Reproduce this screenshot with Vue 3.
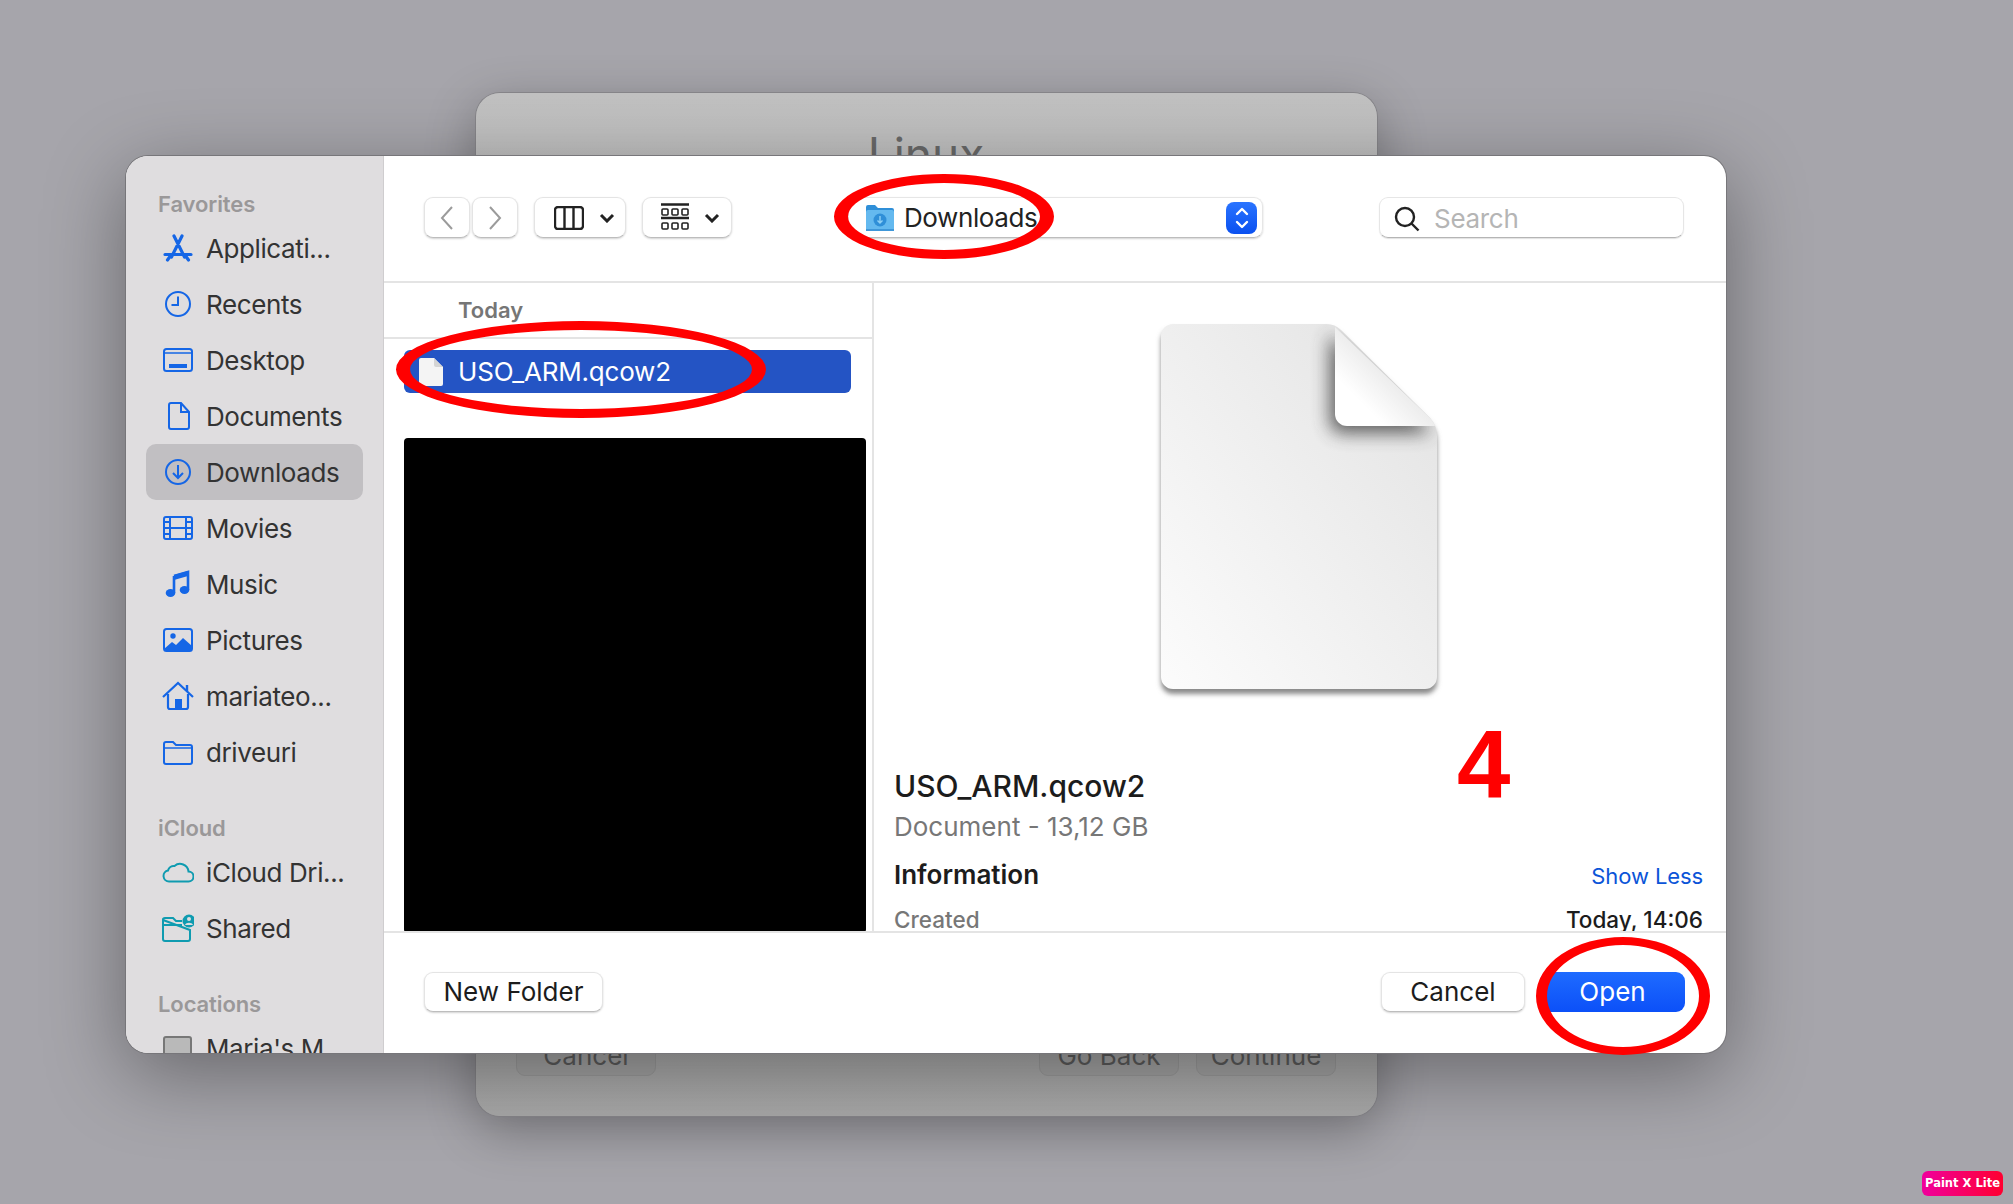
<template>
  <div class="desktop">
    <div class="back-window">
      <h1 class="back-title">Linux</h1>
      <div class="back-footer">
        <button class="back-btn">Cancel</button>
        <div class="back-right">
          <button class="back-btn">Go Back</button>
          <button class="back-btn">Continue</button>
        </div>
      </div>
    </div>

    <div class="dialog">
      <aside class="sidebar">
        <template v-for="section in sections" :key="section.title">
          <div class="side-title">{{ section.title }}</div>
          <div
            v-for="item in section.items"
            :key="item.label"
            class="side-item"
            :class="{ active: item.label === 'Downloads' }"
          >
            <svg class="side-icon" :class="section.tone" viewBox="0 0 32 32" v-html="icons[item.icon]"></svg>
            <span>{{ item.label }}</span>
          </div>
        </template>
      </aside>

      <div class="main">
        <div class="toolbar">
          <div class="nav-group">
            <button class="tool-btn nav-btn">
              <svg width="16" height="26" viewBox="0 0 16 26"><path d="M13 2 3 13l10 11" class="nav-line" /></svg>
            </button>
            <button class="tool-btn nav-btn">
              <svg width="16" height="26" viewBox="0 0 16 26"><path d="m3 2 10 11L3 24" class="nav-line" /></svg>
            </button>
          </div>
          <button class="tool-btn view-btn">
            <svg width="30" height="24" viewBox="0 0 30 24">
              <rect x="1" y="1" width="28" height="22" rx="3" class="dark-line" />
              <path d="M10.500 1v22M19.500 1v22" class="dark-line" />
            </svg>
            <svg width="16" height="10" viewBox="0 0 16 10"><path d="m2 2 6 6 6-6" class="chev" /></svg>
          </button>
          <button class="tool-btn group-btn">
            <svg width="28" height="30" viewBox="0 0 28 30">
              <path d="M0 1.500h28M0 15h28" class="dark-line" />
              <g class="thin-line">
                <rect x="1" y="6" width="6" height="6" rx="1" />
                <rect x="11" y="6" width="6" height="6" rx="1" />
                <rect x="21" y="6" width="6" height="6" rx="1" />
                <rect x="1" y="20" width="6" height="6" rx="1" />
                <rect x="11" y="20" width="6" height="6" rx="1" />
                <rect x="21" y="20" width="6" height="6" rx="1" />
              </g>
            </svg>
            <svg width="16" height="10" viewBox="0 0 16 10"><path d="m2 2 6 6 6-6" class="chev" /></svg>
          </button>

          <div class="path-popup">
            <svg width="30" height="28" viewBox="0 0 30 28">
              <path d="M1 3a2 2 0 0 1 2-2h7l3 3h14a2 2 0 0 1 2 2v4H1z" fill="#2f8fd8" />
              <rect x="1" y="6" width="28" height="21" rx="2" fill="#64b9ef" />
              <rect x="1" y="25" width="28" height="2" fill="#3f97d9" />
              <circle cx="15" cy="16" r="6.500" fill="#2f8fd8" />
              <path d="M15 12v7m-2.500-2.500L15 19l2.500-2.500" stroke="#8fd0f5" stroke-width="1.400" fill="none" />
            </svg>
            <span class="path-name">Downloads</span>
            <span class="stepper">
              <svg width="16" height="26" viewBox="0 0 16 26">
                <path d="m3 9 5-5 5 5M3 17l5 5 5-5" fill="none" stroke="#fff" stroke-width="2.400" stroke-linecap="round" stroke-linejoin="round" />
              </svg>
            </span>
          </div>

          <div class="search">
            <svg width="26" height="26" viewBox="0 0 26 26">
              <circle cx="11" cy="11" r="9" class="dark-line" />
              <path d="m17.500 17.500 7 7" class="dark-line" />
            </svg>
            <span>Search</span>
          </div>
        </div>

        <div class="browser">
          <div class="file-list">
            <div class="list-head">Today</div>
            <div class="file-row">
              <svg width="24" height="28" viewBox="0 0 24 28">
                <path d="M2 0h13l9 9v17a2 2 0 0 1-2 2H2a2 2 0 0 1-2-2V2a2 2 0 0 1 2-2z" fill="#f4f4f4" />
                <path d="M15 0l9 9h-7a2 2 0 0 1-2-2z" fill="#d4d4d4" />
              </svg>
              <span>USO_ARM.qcow2</span>
            </div>
            <div class="redacted"></div>
          </div>

          <div class="preview">
            <svg class="doc" width="300" height="400" viewBox="0 0 300 400">
              <defs>
                <linearGradient id="paper" x1="1" y1="0" x2="0" y2="1">
                  <stop offset="0" stop-color="#e2e2e2" />
                  <stop offset="1" stop-color="#fcfcfc" />
                </linearGradient>
                <linearGradient id="fold" x1="1" y1="0" x2="0" y2="1">
                  <stop offset="0.250" stop-color="#dcdcdc" />
                  <stop offset="0.750" stop-color="#ffffff" />
                </linearGradient>
                <filter id="soft" x="-30%" y="-30%" width="160%" height="160%"><feGaussianBlur stdDeviation="9" /></filter>
                <filter id="edge" x="-10%" y="-10%" width="120%" height="120%"><feGaussianBlur stdDeviation="2.500" /></filter>
                <clipPath id="paper-clip"><path :d="paperPath" /></clipPath>
              </defs>
              <path :d="paperPath" transform="translate(0 5)" fill="#8a8a8a" filter="url(#edge)" />
              <path :d="paperPath" fill="url(#paper)" />
              <g clip-path="url(#paper-clip)">
                <path :d="foldPath" transform="translate(-5 7)" fill="#444" opacity=".85" filter="url(#soft)" />
              </g>
              <path :d="foldPath" fill="url(#fold)" />
            </svg>
            <div class="doc-name">USO_ARM.qcow2</div>
            <div class="doc-kind">Document - 13,12 GB</div>
            <div class="info-head">
              <span class="info-title">Information</span>
              <span class="show-less">Show Less</span>
            </div>
            <div class="info-row">
              <span class="info-key">Created</span>
              <span class="info-val">Today, 14:06</span>
            </div>
          </div>
        </div>

        <div class="footer">
          <button class="tool-btn foot-btn new-folder">New Folder</button>
          <div class="foot-right">
            <button class="tool-btn foot-btn cancel">Cancel</button>
            <button class="foot-btn open">Open</button>
          </div>
        </div>
      </div>
    </div>

    <svg class="marks" width="2013" height="1204" viewBox="0 0 2013 1204">
      <path v-for="(d, i) in rings" :key="i" :d="d" fill="#ff0000" fill-rule="evenodd" />
    </svg>
    <div class="step-no">4</div>
    <div class="badge">Paint X Lite</div>
  </div>
</template>

<script setup>
const sections = [
  {
    title: 'Favorites',
    tone: 'blue',
    items: [
      { label: 'Applicati...', icon: 'apps' },
      { label: 'Recents', icon: 'clock' },
      { label: 'Desktop', icon: 'desktop' },
      { label: 'Documents', icon: 'doc' },
      { label: 'Downloads', icon: 'download' },
      { label: 'Movies', icon: 'film' },
      { label: 'Music', icon: 'music' },
      { label: 'Pictures', icon: 'picture' },
      { label: 'mariateo...', icon: 'home' },
      { label: 'driveuri', icon: 'folder' },
    ],
  },
  {
    title: 'iCloud',
    tone: 'teal',
    items: [
      { label: 'iCloud Dri...', icon: 'cloud' },
      { label: 'Shared', icon: 'shared' },
    ],
  },
  {
    title: 'Locations',
    tone: 'gray',
    items: [{ label: "Maria's M...", icon: 'disk' }],
  },
]

const icons = {
  apps: '<path d="M12 4l10.500 21M20 4 9.500 25M3 22.500h26M5.500 28l2.500-3.500M26.500 28 24 24.500" fill="none" stroke="currentColor" stroke-width="3.200" stroke-linecap="round"/>',
  clock: '<circle cx="16" cy="16" r="12" fill="none" stroke="currentColor" stroke-width="2"/><path d="M16 8.500V17H9.500" fill="none" stroke="currentColor" stroke-width="2"/>',
  desktop: '<rect x="2" y="5" width="28" height="22" rx="2.500" fill="none" stroke="currentColor" stroke-width="2"/><path d="M2 9h28" stroke="currentColor" stroke-width="1.500"/><rect x="7" y="20" width="18" height="4" fill="currentColor"/>',
  doc: '<path d="M9 3h10l8 9v15a2 2 0 0 1-2 2H9a2 2 0 0 1-2-2V5a2 2 0 0 1 2-2z" fill="none" stroke="currentColor" stroke-width="2"/><path d="M19 3v9h8" fill="none" stroke="currentColor" stroke-width="2"/>',
  download: '<circle cx="16" cy="16" r="12" fill="none" stroke="currentColor" stroke-width="2"/><path d="M16 9v13m-5-5 5 5 5-5" fill="none" stroke="currentColor" stroke-width="2"/>',
  film: '<rect x="2" y="5" width="28" height="22" rx="2" fill="none" stroke="currentColor" stroke-width="2"/><path d="M8 5v22M24 5v22M8 16h16M2 10h6M2 16h6M2 22h6M24 10h6M24 16h6M24 22h6" fill="none" stroke="currentColor" stroke-width="2"/>',
  music: '<path d="M12 8 26 4v18" fill="none" stroke="currentColor" stroke-width="2.600"/><path d="M12 7 26 3v5L12 12z" fill="currentColor"/><path d="M12 8v17" fill="none" stroke="currentColor" stroke-width="2.600"/><ellipse cx="8.500" cy="25" rx="4.800" ry="4" fill="currentColor"/><ellipse cx="22.500" cy="22" rx="4.800" ry="4" fill="currentColor"/>',
  picture: '<rect x="2" y="5" width="28" height="22" rx="2.500" fill="none" stroke="currentColor" stroke-width="2"/><circle cx="11" cy="12" r="2.700" fill="currentColor"/><path d="M2 25l8-7 4 3 7-7 9 8v3a2 2 0 0 1-2 2H4a2 2 0 0 1-2-2z" fill="currentColor"/>',
  home: '<path d="M1 17 16 3l15 14" fill="none" stroke="currentColor" stroke-width="2.200"/><path d="M6 14v13a2 2 0 0 0 2 2h16a2 2 0 0 0 2-2V14" fill="none" stroke="currentColor" stroke-width="2.200"/><rect x="13" y="19" width="7" height="10" fill="currentColor"/><path d="M25 5v6" stroke="currentColor" stroke-width="2.400"/>',
  folder: '<path d="M2 8a2 2 0 0 1 2-2h7l3 3h14a2 2 0 0 1 2 2v15a2 2 0 0 1-2 2H4a2 2 0 0 1-2-2z" fill="none" stroke="currentColor" stroke-width="2"/><path d="M2 12h28" stroke="currentColor" stroke-width="1.500"/>',
  cloud: '<path d="M7 25.500a5.500 5.500 0 0 1-1-10.900A6 6 0 0 1 12.500 10a8.500 8.500 0 0 1 14 5.500 5 5 0 0 1 0 10z" fill="none" stroke="currentColor" stroke-width="2"/>',
  shared: '<path d="M1 8a2 2 0 0 1 2-2h8l3 3h6M28 18v9a2 2 0 0 1-2 2H3a2 2 0 0 1-2-2V8zM1 13h19" fill="none" stroke="currentColor" stroke-width="2"/><circle cx="27" cy="9" r="6.500" fill="currentColor"/><circle cx="27" cy="7" r="2" fill="#dfdddf"/><path d="M23 13c1-3 7-3 8 0z" fill="#dfdddf"/>',
  disk: '<rect x="2" y="5" width="27" height="24" rx="2" fill="#b9b9b9" stroke="#777" stroke-width="2"/>',
}

const paperPath =
  'M24 12H178q8 0 14 6L281 106q7 8 7 18V365a12 12 0 0 1-12 12H24a12 12 0 0 1-12-12V24a12 12 0 0 1 12-12Z'
const foldPath = 'M186 15 281 106q3 3 5 8H198a12 12 0 0 1-12-12Z'

// hand drawn rings: thicker on the sides than on top and bottom
const ring = (cx, cy, rx, ry, side, top) => {
  const oval = (a, b) =>
    `M${cx - a} ${cy}a${a} ${b} 0 1 0 ${2 * a} 0a${a} ${b} 0 1 0 ${-2 * a} 0Z`
  return oval(rx, ry) + oval(rx - side, ry - top)
}

const rings = [
  ring(944, 216.5, 110, 42.5, 14, 9),
  ring(581, 369.5, 185, 48.5, 14, 9),
  ring(1623, 996, 87, 59, 11, 8),
]
</script>

<style scoped>
.desktop {
  position: relative;
  width: 2013px;
  height: 1204px;
  overflow: hidden;
  background: #a6a5ab;
  font-family: Inter, "Liberation Sans", sans-serif;
}

.back-window {
  position: absolute;
  left: 476px;
  top: 93px;
  width: 901px;
  height: 1023px;
  box-sizing: border-box;
  border-radius: 24px;
  background: linear-gradient(#c1c1c1, #a9a9a9);
  box-shadow: 0 0 0 1px #868589, 0 14px 50px rgba(0, 0, 0, 0.3);
  display: flex;
  flex-direction: column;
  justify-content: space-between;
  padding: 0 41px 40px 40px;
}

.back-title {
  margin: 31px 0 0;
  text-align: center;
  font-size: 46px;
  line-height: 60px;
  font-weight: 400;
  color: #696969;
}

.back-footer {
  display: flex;
  justify-content: space-between;
}

.back-right {
  display: flex;
  gap: 17px;
}

.back-btn {
  width: 140px;
  height: 60px;
  padding: 18px 0 0;
  border: 1px solid #9b9b9b;
  border-radius: 9px;
  background: #a4a4a4;
  color: #5c5c5c;
  font: 400 26px Inter, sans-serif;
}

.dialog {
  position: absolute;
  left: 126px;
  top: 156px;
  width: 1600px;
  height: 897px;
  display: flex;
  overflow: hidden;
  border-radius: 22px;
  background: #fff;
  box-shadow: 0 0 0 1px #77767a, 0 20px 80px rgba(0, 0, 0, 0.38);
}

.sidebar {
  flex: none;
  width: 258px;
  box-sizing: border-box;
  padding: 34px 20px 0;
  background: #dfdddf;
  border-right: 1px solid #cfcdcf;
  overflow: hidden;
}

.side-title {
  height: 28px;
  margin: 0 0 2px 12px;
  font-size: 22px;
  line-height: 28px;
  font-weight: 600;
  letter-spacing: -0.1px;
  color: #9a9899;
}

.side-item + .side-title {
  margin-top: 34px;
}

.side-item {
  display: flex;
  align-items: center;
  gap: 12px;
  height: 56px;
  padding-left: 16px;
  border-radius: 10px;
  font-size: 26px;
  letter-spacing: -0.4px;
  color: #333;
  white-space: nowrap;
}

.side-item.active {
  background: #c1bfc2;
}

.side-icon {
  flex: none;
  width: 32px;
  height: 32px;
}

.blue {
  color: #1566e6;
}

.teal {
  color: #0f9bb0;
}

.gray {
  color: #777;
}

.main {
  flex: 1;
  min-width: 0;
  display: flex;
  flex-direction: column;
}

.toolbar {
  flex: none;
  height: 127px;
  box-sizing: border-box;
  padding: 41px 40px 0;
  display: flex;
  align-items: flex-start;
  border-bottom: 2px solid #e4e4e4;
}

.tool-btn {
  background: #fff;
  border: 1px solid #e4e4e4;
  border-bottom-color: #bdbdbd;
  border-radius: 9px;
  box-shadow: 0 1px 2px rgba(0, 0, 0, 0.18);
  box-sizing: border-box;
}

.nav-group {
  display: flex;
  gap: 2px;
}

.nav-btn {
  width: 46px;
  height: 41px;
  display: flex;
  align-items: center;
  justify-content: center;
  padding: 0;
}

.nav-line {
  fill: none;
  stroke: #9b9b9b;
  stroke-width: 2;
}

.view-btn,
.group-btn {
  height: 41px;
  display: flex;
  align-items: center;
  padding: 0;
}

.view-btn {
  width: 92px;
  margin-left: 16px;
  padding-left: 19px;
  gap: 15px;
}

.group-btn {
  width: 90px;
  margin-left: 16px;
  padding-left: 18px;
  gap: 15px;
}

.dark-line {
  fill: none;
  stroke: #222;
  stroke-width: 2.400;
}

.thin-line {
  fill: none;
  stroke: #222;
  stroke-width: 1.600;
}

.chev {
  fill: none;
  stroke: #222;
  stroke-width: 3;
}

.path-popup {
  width: 415px;
  height: 41px;
  margin-left: 116px;
  box-sizing: border-box;
  padding: 0 5px 0 16px;
  display: flex;
  align-items: center;
  gap: 9px;
  border: 1px solid #e6e6e6;
  border-bottom-color: #bdbdbd;
  border-radius: 9px;
  box-shadow: 0 1px 2px rgba(0, 0, 0, 0.18);
}

.path-name {
  flex: 1;
  font-size: 26px;
  letter-spacing: -0.4px;
  color: #222;
}

.stepper {
  width: 31px;
  height: 32px;
  display: flex;
  align-items: center;
  justify-content: center;
  border-radius: 8px;
  background: linear-gradient(#2a74ff, #0a50f0);
}

.search {
  width: 305px;
  height: 41px;
  margin-left: 116px;
  box-sizing: border-box;
  padding: 2px 0 0 14px;
  display: flex;
  align-items: center;
  gap: 14px;
  border: 1px solid #e6e6e6;
  border-bottom-color: #b5b5b5;
  border-radius: 9px;
  box-shadow: 0 1px 1px rgba(0, 0, 0, 0.12);
  font-size: 26px;
  letter-spacing: -0.3px;
  color: #b5b5b5;
}

.browser {
  flex: 1;
  min-height: 0;
  display: flex;
  overflow: hidden;
  border-bottom: 2px solid #e4e4e4;
}

.file-list {
  flex: none;
  width: 490px;
  box-sizing: border-box;
  border-right: 2px solid #e4e4e4;
}

.list-head {
  height: 56px;
  box-sizing: border-box;
  padding: 13px 0 0 74px;
  border-bottom: 2px solid #e4e4e4;
  font-size: 22px;
  line-height: 28px;
  font-weight: 600;
  color: #767676;
}

.file-row {
  width: 447px;
  height: 43px;
  margin: 11px 0 0 20px;
  box-sizing: border-box;
  padding-left: 15px;
  display: flex;
  align-items: center;
  gap: 15px;
  border-radius: 6px;
  background: #2454c4;
  color: #fff;
  font-size: 26px;
  letter-spacing: -0.2px;
}

.redacted {
  width: 462px;
  height: 495px;
  margin: 45px 0 0 20px;
  border-radius: 4px;
  background: #000;
}

.preview {
  flex: 1;
  min-width: 0;
  box-sizing: border-box;
  padding: 29px 23px 0 21px;
  overflow: hidden;
}

.doc {
  display: block;
  margin: 0 auto 56px;
}

.doc-name {
  margin-left: -1px;
  font-size: 30px;
  line-height: 36px;
  font-weight: 500;
  color: #1c1c1c;
}

.doc-kind {
  margin-top: 6px;
  margin-left: -1px;
  font-size: 26px;
  line-height: 34px;
  color: #777;
}

.info-head,
.info-row {
  display: flex;
  justify-content: space-between;
  align-items: center;
  margin-left: -1px;
}

.info-head {
  margin-top: 14px;
}

.info-title {
  font-size: 26px;
  line-height: 34px;
  font-weight: 600;
  color: #1c1c1c;
}

.show-less {
  padding-top: 2px;
  font-size: 22px;
  letter-spacing: -0.1px;
  color: #0b54d8;
}

.info-row {
  margin-top: 13px;
  font-size: 22.500px;
  line-height: 30px;
}

.info-key {
  font-weight: 500;
  color: #777;
}

.info-val {
  font-weight: 500;
  color: #1c1c1c;
}

.footer {
  flex: none;
  height: 120px;
  box-sizing: border-box;
  padding: 39px 41px 0 40px;
  display: flex;
  justify-content: space-between;
  align-items: flex-start;
}

.foot-right {
  display: flex;
  gap: 15px;
}

.foot-btn {
  height: 40px;
  padding: 0 0 2px;
  font: 400 26px Inter, sans-serif;
  color: #1c1c1c;
}

.new-folder {
  width: 179px;
}

.cancel {
  width: 144px;
}

.open {
  width: 145px;
  border: 0;
  border-radius: 9px;
  background: linear-gradient(#1e6bff, #0c50f8);
  color: #fff;
}

.marks {
  position: absolute;
  left: 0;
  top: 0;
  pointer-events: none;
}

.step-no {
  position: absolute;
  left: 1457px;
  top: 711px;
  font: 700 96px/108px "Liberation Sans", sans-serif;
  color: #f00;
}

.badge {
  position: absolute;
  left: 1922px;
  top: 1171px;
  width: 81px;
  height: 25px;
  border-radius: 6px;
  background: linear-gradient(90deg, #f0009c, #ff0030);
  color: #fff;
  font: 700 11.500px/25px "DejaVu Sans", sans-serif;
  text-align: center;
  white-space: nowrap;
}
</style>

<style>
body {
  background: #a6a5ab;
}
</style>
